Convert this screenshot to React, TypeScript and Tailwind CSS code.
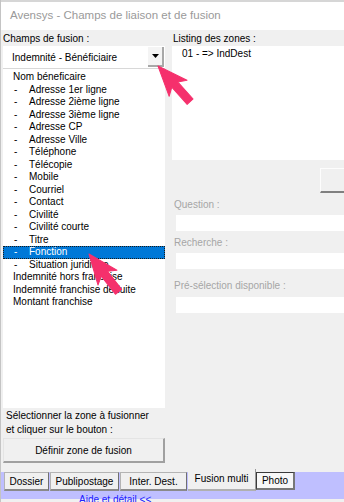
import React from "react";

const fields: { label: string; sub: boolean }[] = [
  { label: "Nom béneficaire", sub: false },
  { label: "Adresse 1er ligne", sub: true },
  { label: "Adresse 2ième ligne", sub: true },
  { label: "Adresse 3ième ligne", sub: true },
  { label: "Adresse CP", sub: true },
  { label: "Adresse Ville", sub: true },
  { label: "Téléphone", sub: true },
  { label: "Télécopie", sub: true },
  { label: "Mobile", sub: true },
  { label: "Courriel", sub: true },
  { label: "Contact", sub: true },
  { label: "Civilité", sub: true },
  { label: "Civilité courte", sub: true },
  { label: "Titre", sub: true },
  { label: "Fonction", sub: true },
  { label: "Situation juridique", sub: true },
  { label: "Indemnité hors franchise", sub: false },
  { label: "Indemnité franchise déduite", sub: false },
  { label: "Montant franchise", sub: false },
];

const SELECTED = "Fonction";

const tabs = [
  { label: "Dossier", w: "w-[45px]" },
  { label: "Publipostage", w: "w-[69px]" },
  { label: "Inter. Dest.", w: "w-[67px]" },
];

const Arrow = ({ x, y, angle }: { x: number; y: number; angle: number }) => (
  <g transform={`translate(${x} ${y}) rotate(${angle})`}>
    <polygon
      points="0,0 30,-12 25,-4 48,-4 48,4 25,4 30,12"
      fill="#f5306c"
      stroke="#f5306c"
      strokeWidth="1"
      strokeLinejoin="round"
    />
  </g>
);

export default function App() {
  return (
    <div className="relative w-[344px] h-[502px] overflow-hidden bg-[#f0f0f0] text-[10px] text-black font-['Liberation_Sans',Arial,sans-serif] border-l border-[#c4c4c4]">
      {/* title bar */}
      <div className="h-[30px] border-t-2 border-[#d6d6d6] bg-white flex items-center pl-[9px]">
        <span className="text-[11.5px] text-[#9a9a9a]">Avensys - Champs de liaison et de fusion</span>
      </div>

      <div className="flex h-[440px]">
        {/* left column */}
        <div className="w-[164px] pl-[2px] flex flex-col">
          <div className="h-[16px] flex items-center">Champs de fusion :</div>
          <div className="h-[22px] bg-white flex items-center justify-between pl-[9px] pr-[1px]">
            <span>Indemnité - Bénéficiaire</span>
            <div className="w-[16px] h-[20px] bg-[#f4f4f4] border-r-2 border-b-2 border-[#a8a8a8] flex items-center justify-center">
              <svg width="7" height="4" viewBox="0 0 7 4">
                <polygon points="0,0 7,0 3.5,4" fill="#000" />
              </svg>
            </div>
          </div>
          <div className="h-px bg-[#d8d8d8]" />
          <div className="h-[339px] bg-white pt-[2px]">
            {fields.map((f) => {
              const sel = f.label === SELECTED;
              return (
                <div
                  key={f.label}
                  className={`h-[12.5px] leading-[12px] flex items-center ${
                    sel ? "bg-[#0078d7] text-white border border-dotted border-[#1a1a1a]" : "border border-transparent"
                  }`}
                >
                  {f.sub ? (
                    <>
                      <span className="w-[25px] pl-[10px]">-</span>
                      <span>{f.label}</span>
                    </>
                  ) : (
                    <span className="pl-[9px]">{f.label}</span>
                  )}
                </div>
              );
            })}
          </div>
          <div className="pl-[3px] pt-[1px] leading-[14px]">
            <div>Sélectionner la zone à fusionner</div>
            <div>et cliquer sur le bouton :</div>
          </div>
          <div className="mt-[1px] h-[25px] bg-[#f0f0f0] border-t border-l border-[#e4e4e4] border-r-2 border-b-2 border-r-[#a0a0a0] border-b-[#a0a0a0] flex items-center justify-center">
            Définir zone de fusion
          </div>
        </div>

        {/* right column */}
        <div className="w-[172px] ml-[7px] flex flex-col">
          <div className="h-[16px] flex items-center pl-px">Listing des zones :</div>
          <div className="h-[114px] bg-white pl-[10px] pt-[2px] leading-[12px]">01 - =&gt; IndDest</div>
          <div className="h-[25px] mt-[8px] flex justify-end">
            <div className="w-[24px] h-[25px] bg-[#f0f0f0] border-t border-l border-[#fdfdfd] border-b-2 border-b-[#808080]" />
          </div>
          <div className="h-[22px] flex items-center pl-[2px] text-[#a6a6a6]">Question :</div>
          <div className="h-[16px] ml-[4px] bg-white" />
          <div className="h-[22px] flex items-center pl-[2px] text-[#a6a6a6]">Recherche :</div>
          <div className="h-[16px] ml-[4px] bg-white" />
          <div className="h-[28px] pt-[4px] flex items-center pl-[2px] text-[#a6a6a6]">Pré-sélection disponible :</div>
          <div className="h-[16px] ml-[4px] bg-white" />
        </div>
      </div>

      {/* tab strip */}
      <div className="h-[32px] pt-[2px]">
        <div className="h-[27px] bg-[#bfbfff] flex items-start pl-[3px] gap-px">
          {tabs.map((t) => (
            <div
              key={t.label}
              className={`${t.w} h-[19px] bg-[#f0f0f0] border-t border-l border-[#b4b4b4] border-r border-b-2 border-r-[#707070] border-b-[#8a8a8a] flex items-center justify-center`}
            >
              {t.label}
            </div>
          ))}
          <div className="w-[68px] h-[22px] -mt-[3px] bg-[#f0f0f0] border-r border-b-2 border-r-[#9a9a9a] border-b-[#b0b0b0] flex items-center justify-center pb-[2px]">
            Fusion multi
          </div>
          <div className="w-[39px] h-[18px] -ml-px bg-[#f7f7f7] border-t border-l border-[#3a3a3a] border-r-2 border-b-2 border-r-[#777] border-b-[#777] flex items-center justify-center">
            Photo
          </div>
        </div>
        <div className="-mt-[5px] pl-[78px] text-[10px] leading-[12px] text-[#2020ff]">Aide et détail &lt;&lt;</div>
      </div>

      {/* annotation arrows */}
      <svg className="absolute inset-0 pointer-events-none" width="344" height="502" viewBox="0 0 344 502">
        <Arrow x={157} y={66} angle={48} />
        <Arrow x={88} y={254} angle={52} />
      </svg>
    </div>
  );
}
